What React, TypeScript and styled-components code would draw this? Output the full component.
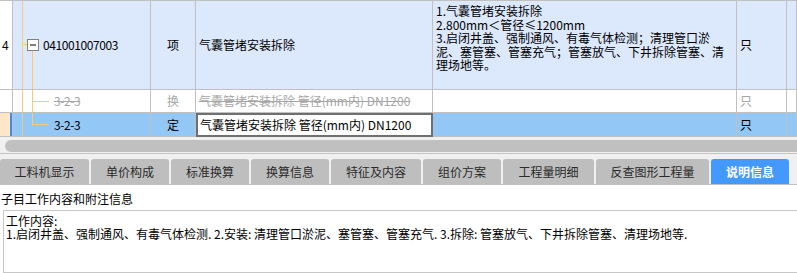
import React from 'react';
import styled, { createGlobalStyle, css } from 'styled-components';

const Global = createGlobalStyle`
  html, body { margin: 0; padding: 0; background: #ffffff; }
  body { font-family: "Noto Sans CJK SC", "Noto Sans", sans-serif; }
`;

const Page = styled.div`
  width: 797px;
  height: 273px;
  overflow: hidden;
  display: flex;
  flex-direction: column;
  background: #f0f0f0;
`;

const Grid = styled.div`
  display: grid;
  grid-template-columns: 13px 138px 45px 237px 304px 50px 1fr;
  grid-template-rows: 89px 23px 24px;
  border-top: 1px solid #c0c0c0;
  font-size: 12px;
  color: #000;
  flex: none;
`;

type CellProps = {
  $bg?: string;
  $center?: boolean;
  $top?: boolean;
  $muted?: boolean;
  $pad?: number;
};

const Cell = styled.div<CellProps>`
  position: relative;
  box-sizing: border-box;
  border-right: 1px solid #c0c0c0;
  border-bottom: 1px solid #c0c0c0;
  background: ${(p) => p.$bg || '#ffffff'};
  display: flex;
  align-items: ${(p) => (p.$top ? 'flex-start' : 'center')};
  justify-content: ${(p) => (p.$center ? 'center' : 'flex-start')};
  padding-left: ${(p) => p.$pad ?? 3}px;
  white-space: nowrap;
  overflow: hidden;
  line-height: 14px;
  ${(p) =>
    p.$muted &&
    css`
      color: #a6a6a6;
    `}
`;

const IndexCell = styled(Cell)<{ $marked?: boolean }>`
  padding-left: 2px;
  ${(p) =>
    p.$marked &&
    css`
      background: #ffe6c6;
      box-shadow: inset -2px 0 0 #3d8ef0;
    `}
`;

const Strike = styled.span`
  text-decoration: line-through;
`;

const EditCell = styled(Cell)`
  background: #ffffff;
  border: 2px solid #6f6f6f;
  padding-left: 2px;
`;

const FeatureText = styled.div`
  padding-top: 3px;
`;

const FeatureLine = styled.div`
  height: 13.5px;
  line-height: 13.5px;
`;

const TreeSvg = styled.svg`
  position: absolute;
  left: 0;
  top: 0;
  pointer-events: none;
`;

const CodeText = styled.span<{ $indent: number }>`
  padding-left: ${(p) => p.$indent}px;
  letter-spacing: -0.4px;
`;

const TREE = '#ffc878';

const TreeRoot = () => (
  <TreeSvg width={40} height={89}>
    <line x1={9.5} y1={0} x2={9.5} y2={89} stroke={TREE} />
    <line x1={9} y1={43.5} x2={14} y2={43.5} stroke={TREE} />
    <line x1={19.5} y1={50} x2={19.5} y2={89} stroke={TREE} />
    <rect x={14.5} y={38.5} width={11} height={11} fill="#ffffff" stroke="#808080" />
    <line x1={17} y1={44} x2={23} y2={44} stroke="#000" />
  </TreeSvg>
);

const TreeChild = ({ h, last }: { h: number; last?: boolean }) => (
  <TreeSvg width={40} height={h}>
    <line x1={9.5} y1={0} x2={9.5} y2={h} stroke={TREE} />
    <line x1={19.5} y1={0} x2={19.5} y2={last ? 11.5 : h} stroke={TREE} />
    <line x1={19} y1={11.5} x2={36} y2={11.5} stroke={TREE} />
  </TreeSvg>
);

const ScrollZone = styled.div`
  box-sizing: border-box;
  padding: 3px 0 1px;
  border-bottom: 1px solid #c4c4c4;
  flex: none;
`;

const Track = styled.div`
  height: 12px;
  padding-left: 5px;
  background: #f0f0f0;
`;

const Thumb = styled.div`
  height: 12px;
  background: #c0c0c0;
  border-radius: 6px 0 0 6px;
`;

const TabBar = styled.div`
  display: flex;
  gap: 2px;
  padding-top: 5px;
  height: 30px;
  box-sizing: border-box;
  flex: none;
`;

const Tab = styled.div<{ $w: number; $active?: boolean }>`
  width: ${(p) => p.$w}px;
  height: 25px;
  flex: none;
  display: flex;
  align-items: center;
  justify-content: center;
  border-radius: 3px 3px 0 0;
  font-size: 12px;
  background: ${(p) => (p.$active ? '#4499ff' : '#bebebe')};
  color: ${(p) => (p.$active ? '#ffffff' : '#2a2a2a')};
  font-weight: ${(p) => (p.$active ? 700 : 400)};
`;

const Panel = styled.div`
  flex: 1;
  background: #ffffff;
  border-top: 1px solid #c0c0c0;
  display: flex;
  flex-direction: column;
`;

const PanelTitle = styled.div`
  height: 25px;
  line-height: 28px;
  padding-left: 1px;
  font-size: 12px;
  color: #000;
`;

const TextBox = styled.div`
  flex: 1;
  margin-left: 3px;
  border: 1px solid #c8c8c8;
  border-right: none;
  padding: 3px 2px;
  font-size: 12px;
  color: #000;
  white-space: nowrap;
`;

const BoxLine = styled.div`
  height: 13px;
  line-height: 13px;
`;

const ROW1 = '#dce8fc';
const ROW3 = '#93c8f6';

const tabs: { label: string; w: number; active?: boolean }[] = [
  { label: '工料机显示', w: 89 },
  { label: '单价构成', w: 78 },
  { label: '标准换算', w: 78 },
  { label: '换算信息', w: 78 },
  { label: '特征及内容', w: 90 },
  { label: '组价方案', w: 78 },
  { label: '工程量明细', w: 91 },
  { label: '反查图形工程量', w: 113 },
  { label: '说明信息', w: 78, active: true },
];

const features = [
  '1.气囊管堵安装拆除',
  '2.800mm＜管径≤1200mm',
  '3.启闭井盖、强制通风、有毒气体检测；清理管口淤',
  '泥、塞管塞、管塞充气；管塞放气、下井拆除管塞、清',
  '理场地等。',
];

export default function App() {
  return (
    <Page>
      <Global />
      <Grid>
        <IndexCell>4</IndexCell>
        <Cell $bg={ROW1} $pad={0}>
          <TreeRoot />
          <CodeText $indent={30}>041001007003</CodeText>
        </Cell>
        <Cell $bg={ROW1} $center $pad={0}>项</Cell>
        <Cell $bg={ROW1}>气囊管堵安装拆除</Cell>
        <Cell $bg={ROW1} $top>
          <FeatureText>
            {features.map((f) => (
              <FeatureLine key={f}>{f}</FeatureLine>
            ))}
          </FeatureText>
        </Cell>
        <Cell $bg={ROW1}>只</Cell>
        <Cell $bg={ROW1} />

        <IndexCell />
        <Cell $pad={0} $muted>
          <TreeChild h={23} />
          <CodeText $indent={41}>
            <Strike>3-2-3</Strike>
          </CodeText>
        </Cell>
        <Cell $center $pad={0} $muted>换</Cell>
        <Cell $muted>
          <Strike>气囊管堵安装拆除 管径(mm内) DN1200</Strike>
        </Cell>
        <Cell />
        <Cell $muted>只</Cell>
        <Cell />

        <IndexCell $marked />
        <Cell $bg={ROW3} $pad={0}>
          <TreeChild h={24} last />
          <CodeText $indent={41}>3-2-3</CodeText>
        </Cell>
        <Cell $bg={ROW3} $center $pad={0}>定</Cell>
        <EditCell>气囊管堵安装拆除 管径(mm内) DN1200</EditCell>
        <Cell $bg={ROW3} />
        <Cell $bg={ROW3}>只</Cell>
        <Cell $bg={ROW3} />
      </Grid>
      <ScrollZone>
        <Track>
          <Thumb />
        </Track>
      </ScrollZone>
      <TabBar>
        {tabs.map((t) => (
          <Tab key={t.label} $w={t.w} $active={t.active}>
            {t.label}
          </Tab>
        ))}
      </TabBar>
      <Panel>
        <PanelTitle>子目工作内容和附注信息</PanelTitle>
        <TextBox>
          <BoxLine>工作内容:</BoxLine>
          <BoxLine>
            1.启闭井盖、强制通风、有毒气体检测. 2.安装: 清理管口淤泥、塞管塞、管塞充气. 3.拆除: 管塞放气、下井拆除管塞、清理场地等.
          </BoxLine>
        </TextBox>
      </Panel>
    </Page>
  );
}
